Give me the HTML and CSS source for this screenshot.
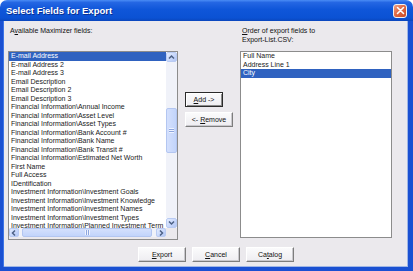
FILE: index.html
```html
<!DOCTYPE html>
<html lang="en">
<head>
  <meta charset="UTF-8">
  <title>Select Fields for Export</title>
  <link rel="stylesheet" href="styles.css">
</head>
<body>

  <div class="window">
    <!-- Title bar -->
    <div class="titlebar">
      <span class="title">Select Fields for Export</span>
      <span class="close">
        <svg width="9" height="9" viewBox="0 0 9 9">
          <path d="M1.5 1.5 L7.5 7.5 M7.5 1.5 L1.5 7.5" stroke="#fff" stroke-width="1.6" stroke-linecap="round"/>
        </svg>
      </span>
    </div>

    <div class="frame">
      <div class="main">

        <!-- Available fields -->
        <div class="col col-left">
          <div class="label">A<u>v</u>ailable Maximizer fields:</div>
          <div class="listbox listbox-scroll">
            <div class="list-area">
              <ul class="items">
                <li class="selected">E-mail Address</li>
                <li>E-mail Address 2</li>
                <li>E-mail Address 3</li>
                <li>Email Description</li>
                <li>Email Description 2</li>
                <li>Email Description 3</li>
                <li>Financial Information\Annual Income</li>
                <li>Financial Information\Asset Level</li>
                <li>Financial Information\Asset Types</li>
                <li>Financial Information\Bank Account #</li>
                <li>Financial Information\Bank Name</li>
                <li>Financial Information\Bank Transit #</li>
                <li>Financial Information\Estimated Net Worth</li>
                <li>First Name</li>
                <li>Full Access</li>
                <li>IDentification</li>
                <li>Investment Information\Investment Goals</li>
                <li>Investment Information\Investment Knowledge</li>
                <li>Investment Information\Investment Names</li>
                <li>Investment Information\Investment Types</li>
                <li>Investment Information\Planned Investment Term</li>
              </ul>
              <div class="vscroll">
                <span class="sb-btn">
                  <svg width="9" height="8" viewBox="0 0 9 8"><path d="M2 5.5 L4.5 3 L7 5.5" fill="none" stroke="#4d6185" stroke-width="1.5"/></svg>
                </span>
                <div class="sb-track">
                  <div class="sb-thumb sb-thumb-v"><span class="grip-v"></span></div>
                </div>
                <span class="sb-btn">
                  <svg width="9" height="8" viewBox="0 0 9 8"><path d="M2 2.5 L4.5 5 L7 2.5" fill="none" stroke="#4d6185" stroke-width="1.5"/></svg>
                </span>
              </div>
            </div>
            <div class="hscroll-row">
              <div class="hscroll">
                <span class="sb-btn">
                  <svg width="8" height="8" viewBox="0 0 8 8"><path d="M5 1.5 L2.5 4 L5 6.5" fill="none" stroke="#4d6185" stroke-width="1.5"/></svg>
                </span>
                <div class="sb-track sb-track-h">
                  <div class="sb-thumb sb-thumb-h"><span class="grip-h"></span></div>
                </div>
                <span class="sb-btn">
                  <svg width="8" height="8" viewBox="0 0 8 8"><path d="M3 1.5 L5.5 4 L3 6.5" fill="none" stroke="#4d6185" stroke-width="1.5"/></svg>
                </span>
              </div>
              <div class="corner"></div>
            </div>
          </div>
        </div>

        <!-- Add / Remove -->
        <div class="col col-mid">
          <button class="btn btn-default btn-add"><u>A</u>dd -&gt;</button>
          <button class="btn btn-remove">&lt;- <u>R</u>emove</button>
        </div>

        <!-- Export order -->
        <div class="col col-right">
          <div class="label"><u>O</u>rder of export fields to<br>Export-List.CSV:</div>
          <div class="listbox listbox-plain">
            <ul class="items">
              <li>Full Name</li>
              <li>Address Line 1</li>
              <li class="selected">City</li>
            </ul>
          </div>
        </div>

      </div>

      <!-- Bottom buttons -->
      <div class="actions">
        <button class="btn btn-action"><u>E</u>xport</button>
        <button class="btn btn-action"><u>C</u>ancel</button>
        <button class="btn btn-action">Ca<u>t</u>alog</button>
      </div>
    </div>
  </div>

</body>
</html>
```

FILE: styles.css
```css
/* Page reset */
body {
  margin: 0;
  padding: 0;
  background: #ffffff;
  font-family: "Liberation Sans", Arial, sans-serif;
  font-size: 7px;
  color: #000;
}

/* Dialog window */
.window {
  width: 413px;
  height: 271px;
  display: flex;
  flex-direction: column;
}

/* XP style title bar */
.titlebar {
  height: 21px;
  flex: none;
  display: flex;
  align-items: center;
  justify-content: space-between;
  padding: 0 6px 0 6px;
  border-radius: 7px 7px 0 0;
  background: linear-gradient(#4a8cf5 0%, #2466e3 12%, #0f56d9 45%, #0b52d4 85%, #0a46bd 100%);
}

.title {
  color: #ffffff;
  font-weight: bold;
  font-size: 9.5px;
  text-shadow: 1px 1px 0 #0a2f90;
  user-select: none;
}

.close {
  width: 12px;
  height: 12px;
  border: 1px solid #f2f2f2;
  border-radius: 3px;
  background: linear-gradient(135deg, #f0a287 0%, #e06a45 45%, #c84a23 100%);
  display: flex;
  align-items: center;
  justify-content: center;
}

/* Body of the window with the blue frame */
.frame {
  flex: 1;
  background: #ebe9ed;
  border-left: 3px solid #1a50d2;
  border-right: 5px solid #1a50d2;
  border-bottom: 4px solid #1a50d2;
  box-shadow: inset 1px 0 0 #3d74e6, inset -1px -1px 0 #9fb6e6;
  display: flex;
  flex-direction: column;
}

.main {
  display: flex;
  padding: 6px 0 0 5px;
}

.col {
  display: flex;
  flex-direction: column;
}

.col-left {
  width: 170px;
}

.col-mid {
  width: 48px;
  margin-left: 7px;
  padding-top: 65px;
  gap: 5px;
  align-items: flex-start;
}

.col-right {
  width: 152px;
  margin-left: 7px;
}

.label {
  height: 24px;
  line-height: 8.5px;
  padding-left: 2px;
  color: #111;
}

/* List boxes */
.listbox {
  border: 1px solid #8c8c8c;
  box-sizing: border-box;
  background: #ffffff;
}

.listbox-scroll {
  height: 189px;
  display: flex;
  flex-direction: column;
  background: #ebe9ed;
}

.listbox-plain {
  height: 187px;
}

.list-area {
  height: 176px;
  display: flex;
  background: #ffffff;
}

.items {
  flex: 1;
  list-style: none;
  margin: 0;
  padding: 0;
  overflow: hidden;
}

.items li {
  height: 8.5px;
  line-height: 8.5px;
  padding-left: 2px;
  white-space: nowrap;
  color: #1a1a1a;
}

.items li.selected {
  background: #2f62c0;
  color: #ffffff;
}

/* Scroll bars */
.vscroll {
  width: 11px;
  display: flex;
  flex-direction: column;
}

.sb-btn {
  flex: none;
  width: 10px;
  height: 10px;
  box-sizing: border-box;
  border: 1px solid #b9cbf3;
  border-radius: 2px;
  background: linear-gradient(135deg, #e3ecfe 0%, #c6d6fb 60%, #b2c6f3 100%);
  display: flex;
  align-items: center;
  justify-content: center;
}

.vscroll .sb-btn {
  width: 11px;
}

.sb-track {
  flex: 1;
  background: #f0f2f9;
}

.sb-thumb {
  box-sizing: border-box;
  border: 1px solid #b3c6f1;
  border-radius: 2px;
  background: linear-gradient(90deg, #d4e0fd, #c2d4fb);
  display: flex;
  align-items: center;
  justify-content: center;
}

.sb-thumb-v {
  margin-top: 46px;
  height: 45px;
}

.grip-v {
  width: 5px;
  height: 5px;
  background: repeating-linear-gradient(#eef3ff 0, #eef3ff 1px, #8ea6de 1px, #8ea6de 2px);
}

.hscroll-row {
  display: flex;
  height: 9px;
}

.hscroll {
  flex: 1;
  display: flex;
}

.hscroll .sb-btn {
  height: 9px;
}

.sb-track-h {
  display: flex;
  padding-left: 3px;
}

.sb-thumb-h {
  width: 130px;
  height: 9px;
  background: linear-gradient(#d4e0fd, #c2d4fb);
}

.grip-h {
  width: 5px;
  height: 5px;
  background: repeating-linear-gradient(90deg, #eef3ff 0, #eef3ff 1px, #8ea6de 1px, #8ea6de 2px);
}

.corner {
  width: 11px;
  background: #ebe9ed;
}

/* Buttons */
.btn {
  font-family: "Liberation Sans", Arial, sans-serif;
  font-size: 7px;
  color: #111;
  height: 15px;
  padding: 0;
  box-sizing: border-box;
  background: linear-gradient(#fbfbfc, #eeedf1);
  border: 1px solid;
  border-color: #ffffff #7d7d7d #7d7d7d #ffffff;
  box-shadow: inset -1px -1px 0 #c9c8cd;
}

.btn-default {
  border-color: #2a2a2a;
  box-shadow: inset 1px 1px 0 #fff, inset -1px -1px 0 #8a8a8a;
}

.btn-add {
  width: 38px;
}

.btn-remove {
  width: 48px;
}

.actions {
  display: flex;
  gap: 6px;
  padding: 7px 0 0 135px;
}

.btn-action {
  width: 48px;
}
```
